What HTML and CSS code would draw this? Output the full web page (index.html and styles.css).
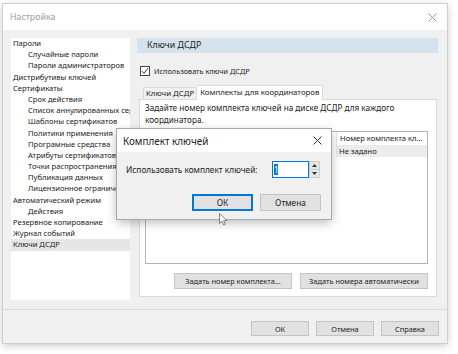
FILE: index.html
```html
<!DOCTYPE html>
<html lang="ru">
<head>
<meta charset="utf-8">
<title>Настройка</title>
<link rel="stylesheet" href="styles.css">
</head>
<body>
<div class="window">
  <div class="titlebar">
    <span class="title">Настройка</span>
    <svg class="close" width="9" height="9" viewBox="0 0 9 9"><path d="M0.5 0.5L8.5 8.5M8.5 0.5L0.5 8.5" stroke="#9a9a9a" stroke-width="1"/></svg>
  </div>
  <div class="body">
    <div class="main">
      <ul class="tree">
        <li class="l0">Пароли</li>
        <li class="l1">Случайные пароли</li>
        <li class="l1">Пароли администраторов</li>
        <li class="l0">Дистрибутивы ключей</li>
        <li class="l0">Сертификаты</li>
        <li class="l1">Срок действия</li>
        <li class="l1">Список аннулированных сертификатов</li>
        <li class="l1">Шаблоны сертификатов</li>
        <li class="l1">Политики применения</li>
        <li class="l1">Програмные средства</li>
        <li class="l1">Атрибуты сертификатов</li>
        <li class="l1">Точки распространения</li>
        <li class="l1">Публикация данных</li>
        <li class="l1">Лицензионное ограничение</li>
        <li class="l0">Автоматический режим</li>
        <li class="l1">Действия</li>
        <li class="l0">Резервное копирование</li>
        <li class="l0">Журнал событий</li>
        <li class="l0 selected">Ключи ДСДР</li>
      </ul>
      <div class="panel">
        <div class="header">Ключи ДСДР</div>
        <div class="check">
          <span class="box"><svg width="8" height="8" viewBox="0 0 8 8"><path d="M1 4.2L3 6.3L7 1.3" fill="none" stroke="#333" stroke-width="1"/></svg></span>
          <span>Использовать ключи ДСДР</span>
        </div>
        <div class="tabs">
          <span class="tab">Ключи ДСДР</span>
          <span class="tab active">Комплекты для координаторов</span>
        </div>
        <div class="tabcontent">
          <p class="hint">Задайте номер комплекта ключей на диске ДСДР для каждого координатора.</p>
          <div class="list">
            <div class="col">
              <div class="colhead">Номер комплекта кл...</div>
              <div class="row">Не задано</div>
            </div>
          </div>
          <div class="actions">
            <button class="btn wide1">Задать номер комплекта...</button>
            <button class="btn wide2">Задать номера автоматически</button>
          </div>
        </div>
      </div>
    </div>
    <div class="footer">
      <button class="btn fbtn">ОК</button>
      <button class="btn fbtn">Отмена</button>
      <button class="btn fbtn">Справка</button>
    </div>
  </div>
</div>

<div class="modal">
  <div class="mtitle">
    <span>Комплект ключей</span>
    <svg class="mclose" width="9" height="9" viewBox="0 0 9 9"><path d="M0.5 0.5L8.5 8.5M8.5 0.5L0.5 8.5" stroke="#333" stroke-width="1"/></svg>
  </div>
  <div class="mbody">
    <div class="mrow">
      <span class="mlabel">Использовать комплект ключей:</span>
      <div class="spin">
        <div class="spinfield"><span class="sel">1</span></div>
        <div class="spinbtns">
          <span class="sb"><svg width="5" height="3" viewBox="0 0 5 3"><path d="M0 3L2.5 0L5 3Z" fill="#333"/></svg></span>
          <span class="sb"><svg width="5" height="3" viewBox="0 0 5 3"><path d="M0 0L2.5 3L5 0Z" fill="#333"/></svg></span>
        </div>
      </div>
    </div>
    <div class="mactions">
      <button class="btn mbtn default">ОК</button>
      <button class="btn mbtn">Отмена</button>
    </div>
  </div>
</div>

<svg class="cursor" width="9" height="13" viewBox="0 0 9 13"><path d="M0.5 0.5L0.5 10.5L3 8.2L4.8 12L6.3 11.3L4.6 7.7L8 7.7Z" fill="#fff" stroke="#666" stroke-width="0.8" stroke-linejoin="round"/></svg>
</body>
</html>
```

FILE: styles.css
```css
* { box-sizing: border-box; }
html, body { margin: 0; padding: 0; }
body {
  background: #ffffff;
  font-family: "Noto Sans", "Open Sans", sans-serif;
  font-size: 7.6px;
  color: #222;
  width: 458px;
  height: 354px;
  overflow: hidden;
  position: relative;
}
.window {
  margin: 4px 0 0 3px;
  width: 444px;
  height: 339px;
  display: flex;
  flex-direction: column;
  box-shadow: 0 0 0 1px #cfcfcf, 0 2px 8px rgba(0,0,0,0.25);
  background: #f0f0f0;
}
.titlebar {
  height: 26px;
  background: #fff;
  display: flex;
  align-items: center;
  justify-content: space-between;
  padding: 0 10px 0 7px;
}
.title { color: #9c9c9c; font-size: 8.8px; }
.close { display: block; }
.body { flex: 1; display: flex; flex-direction: column; }
.main {
  display: flex;
  gap: 7px;
  padding: 8px 9px 0 8px;
  height: 270px;
}
.tree {
  list-style: none;
  margin: 0;
  padding: 0;
  width: 119px;
  height: 262px;
  background: #fff;
  overflow: hidden;
  flex-shrink: 0;
  font-size: 7.6px;
}
.tree li {
  height: 11.2px;
  line-height: 11.2px;
  white-space: nowrap;
  overflow: hidden;
}
.tree .l0 { padding-left: 2px; }
.tree .l1 { padding-left: 17px; }
.tree .selected { background: #e6e6e6; }
.panel { flex: 1; display: flex; flex-direction: column; }
.header {
  height: 15px;
  background: #d4e2ee;
  font-size: 8.8px;
  line-height: 15px;
  padding-left: 10px;
  color: #222;
}
.check {
  margin-top: 13px;
  height: 10px;
  display: flex;
  align-items: center;
  gap: 4px;
  padding-left: 3px;
  font-size: 7.3px;
}
.box {
  width: 10px;
  height: 10px;
  border: 1px solid #444;
  background: #fff;
  display: flex;
  align-items: center;
  justify-content: center;
}
.tabs {
  margin-top: 9px;
  padding-left: 6px;
  display: flex;
  align-items: flex-end;
  height: 14px;
  position: relative;
  z-index: 1;
  font-size: 7.8px;
}
.tab {
  height: 12px;
  line-height: 11px;
  padding: 0 2px;
  border: 1px solid #d9d9d9;
  border-bottom: none;
  background: #f0f0f0;
  white-space: nowrap;
}
.tab.active {
  height: 15px;
  margin-bottom: -1px;
  background: #fff;
  padding: 0 3px;
  line-height: 13px;
  border-left: none;
}
.tabcontent {
  margin: 0 1px 0 2px;
  height: 198px;
  background: #fff;
  border: 1px solid #d9d9d9;
  padding: 2px 8px 7px 5px;
  display: flex;
  flex-direction: column;
}
.hint { margin: 0; line-height: 12px; height: 24px; font-size: 8.2px; }
.list {
  margin-top: 5px;
  height: 133px;
  border: 1px solid #b4b4b4;
  display: flex;
  justify-content: flex-end;
}
.col { width: 91px; }
.colhead {
  height: 13px;
  line-height: 13px;
  padding-left: 3px;
  white-space: nowrap;
  overflow: hidden;
  border-left: 1px solid #e8e8e8;
}
.row {
  height: 12px;
  line-height: 12px;
  padding-left: 3px;
  background: #ececec;
}
.actions {
  margin-top: 9px;
  display: flex;
  justify-content: flex-end;
  gap: 8px;
}
.btn {
  font-family: inherit;
  font-size: 7.4px;
  color: #222;
  background: #e1e1e1;
  border: 1px solid #c4c4c4;
  padding: 0;
  margin: 0;
}
.wide1 { width: 118px; height: 16px; }
.wide2 { width: 128px; height: 16px; }
.footer {
  margin-top: 9px;
  border-top: 1px solid #dadada;
  padding: 11px 8px 7px 0;
  display: flex;
  justify-content: flex-end;
  gap: 7px;
}
.fbtn { width: 58px; height: 15px; }
.modal {
  position: absolute;
  left: 117px;
  top: 129px;
  width: 214px;
  height: 90px;
  background: #f0f0f0;
  box-shadow: 0 0 0 1px #a8a8a8, 0 3px 10px rgba(0,0,0,0.3);
  display: flex;
  flex-direction: column;
  font-size: 8.3px;
}
.mtitle {
  height: 23px;
  background: #fff;
  display: flex;
  align-items: center;
  justify-content: space-between;
  padding: 0 9px 0 6px;
  font-size: 9.9px;
}
.mclose { display: block; }
.mbody { padding: 9px 11px 0 9px; }
.mrow { display: flex; justify-content: space-between; align-items: center; height: 17px; }
.spin { display: flex; height: 17px; }
.spinfield {
  width: 37px;
  height: 17px;
  background: #fff;
  border: 1px solid #0078d7;
  padding: 2px 0 0 1px;
}
.sel {
  display: inline-block;
  background: #0078d7;
  color: #fff;
  width: 4px;
  height: 11px;
  line-height: 11px;
  font-size: 8px;
  text-align: center;
}
.spinbtns { width: 11px; display: flex; flex-direction: column; }
.sb {
  flex: 1;
  background: #e6e6e6;
  border: 1px solid #cfcfcf;
  display: flex;
  align-items: center;
  justify-content: center;
}
.sb + .sb { border-top: none; }
.mactions {
  margin-top: 16px;
  display: flex;
  justify-content: flex-end;
  gap: 7px;
  margin-right: -1px;
}
.mbtn { width: 61px; height: 17px; font-size: 8.3px; }
.mbtn.default { border: 1px solid #0078d7; box-shadow: inset 0 0 0 1px #0078d7; }
.cursor { position: absolute; left: 219px; top: 213px; }
```
